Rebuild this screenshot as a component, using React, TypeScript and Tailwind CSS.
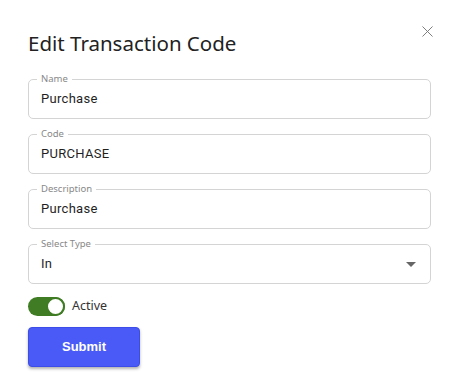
import { X } from 'lucide-react'

function Field({ label, value, select }: { label: string; value: string; select?: boolean }) {
  return (
    <div className="relative flex h-[40px] items-center rounded-[5px] border border-[#d4d4d4] pl-[12px] pr-[14px]">
      <span className="absolute -top-[7px] left-[8px] bg-white px-[4px] text-[9.5px] leading-[12px] text-[#888] font-['Noto_Sans',sans-serif]">
        {label}
      </span>
      <span className="flex-1 text-[13px] text-[#1f1f1f] font-['Roboto',sans-serif] tracking-[0.3px]">
        {value}
      </span>
      {select && (
        <svg width="10" height="5" viewBox="0 0 10 5">
          <path d="M0 0 L10 0 L5 5 Z" fill="#666" />
        </svg>
      )}
    </div>
  )
}

export default function App() {
  return (
    <div className="w-[458px] h-[392px] bg-white relative">
      <button className="absolute left-[418px] top-[22px] text-[#777]">
        <X size={19} strokeWidth={1.2} />
      </button>
      <div className="pl-[28px] pt-[28px]">
        <h1 className="text-[20.5px] leading-[30px] text-[#222] font-['Noto_Sans',sans-serif] mb-[21px]">
          Edit Transaction Code
        </h1>
        <div className="flex flex-col gap-[15px] w-[403px]">
          <Field label="Name" value="Purchase" />
          <Field label="Code" value="PURCHASE" />
          <Field label="Description" value="Purchase" />
          <Field label="Select Type" value="In" select />
        </div>
        <div className="flex items-center gap-[7px] mt-[13px]">
          <div className="relative h-[19px] w-[37px] rounded-full bg-[#3f7c23]">
            <div className="absolute right-0 top-0 h-[19px] w-[19px] rounded-full bg-white border-[2px] border-[#3f7c23]" />
          </div>
          <span className="text-[12.5px] text-[#333] font-['Noto_Sans',sans-serif]">Active</span>
        </div>
        <button className="mt-[11px] h-[40px] w-[112px] rounded-[4px] bg-[#4a5af6] border border-[#3d4de8] text-white text-[13px] font-bold font-['Liberation_Sans',sans-serif] shadow-[0_2px_3px_rgba(0,0,0,0.3)]">
          Submit
        </button>
      </div>
    </div>
  )
}
